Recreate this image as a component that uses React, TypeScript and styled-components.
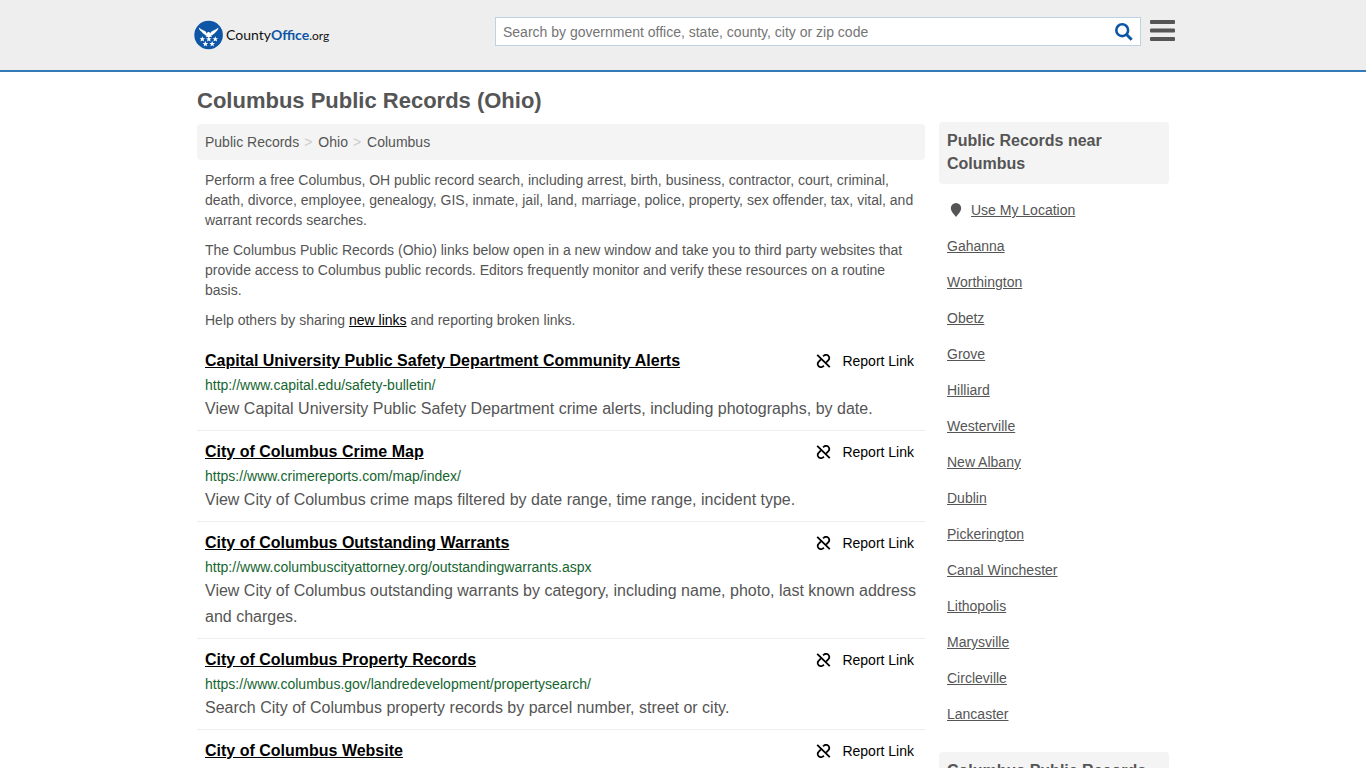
import React from "react";
import styled, { createGlobalStyle } from "styled-components";

const GlobalStyle = createGlobalStyle`
  * { box-sizing: border-box; }
  body {
    margin: 0;
    background: #fff;
    color: #555;
    font-family: Arial, "Liberation Sans", sans-serif;
    font-size: 14px;
    line-height: 20px;
  }
`;

const Page = styled.div`
  min-height: 100vh;
`;

const Header = styled.header`
  background: #eee;
  border-bottom: 2px solid #337ab7;
`;

const HeaderInner = styled.div`
  display: flex;
  align-items: flex-start;
  justify-content: space-between;
  max-width: 984px;
  height: 70px;
  margin: 0 auto;
  padding: 17px 0 0 3px;
`;

const Logo = styled.a`
  display: flex;
  align-items: center;
  gap: 2px;
  height: 36px;
  color: #111;
  font-family: Lato, sans-serif;
  font-size: 14px;
  text-decoration: none;
  svg { display: block; }
  strong { color: #0d56a6; font-weight: 700; }
  small { font-size: 12px; font-weight: 400; }
`;

const Tools = styled.div`
  display: flex;
  align-items: flex-start;
  gap: 9px;
  width: 680px;
`;

const SearchForm = styled.form`
  display: flex;
  flex: 1;
  height: 29px;
  background: #fff;
  border: 1px solid #bcd3e6;
`;

const SearchInput = styled.input`
  flex: 1;
  min-width: 0;
  padding: 0 7px;
  border: 0;
  outline: 0;
  background: transparent;
  font: inherit;
  color: #555;
  &::placeholder { color: #757575; opacity: 1; }
`;

const IconButton = styled.button`
  display: flex;
  align-items: center;
  justify-content: center;
  padding: 0;
  border: 0;
  background: transparent;
  cursor: pointer;
  svg { display: block; }
`;

const SearchButton = styled(IconButton)`
  width: 32px;
`;

const MenuButton = styled(IconButton)`
  width: 25px;
  height: 27px;
`;

const Columns = styled.div`
  display: flex;
  align-items: flex-start;
  gap: 14px;
  max-width: 972px;
  margin: 0 auto;
`;

const Main = styled.main`
  flex: 1;
  min-width: 0;
`;

const Title = styled.h1`
  margin: 0;
  padding: 15px 0 9px;
  font-size: 22px;
  line-height: 28px;
`;

const Breadcrumb = styled.nav`
  display: flex;
  padding: 8px;
  border-radius: 4px;
  background: #f4f4f4;
  a { color: inherit; text-decoration: none; }
  span { padding: 0 6px 0 5px; color: #ccc; }
`;

const Intro = styled.div`
  padding: 10px 8px;
  p { margin: 0 0 10px; }
  p:last-child { margin: 0; }
  a { color: #000; }
`;

const Records = styled.ul`
  margin: 0;
  padding: 0;
  list-style: none;
`;

const RecordItem = styled.li`
  padding: 8px;
  border-bottom: 1px solid #eee;
`;

const RecordHead = styled.div`
  display: flex;
  justify-content: space-between;
  line-height: 26px;
`;

const RecordLink = styled.a`
  color: #000;
  font-size: 16px;
  font-weight: 700;
`;

const ReportLink = styled.a`
  display: flex;
  align-items: center;
  gap: 11px;
  padding-right: 3px;
  color: #000;
  text-decoration: none;
`;

const RecordUrl = styled.div`
  color: #15652f;
  line-height: 22px;
`;

const RecordText = styled.p`
  margin: 0;
  font-size: 16px;
  line-height: 26px;
`;

const Aside = styled.aside`
  width: 230px;
  padding-top: 50px;
`;

const PanelTitle = styled.h2`
  margin: 0;
  padding: 7px 8px 9px;
  border-radius: 4px;
  background: #f4f4f4;
  font-size: 16px;
  line-height: 23px;
`;

const Places = styled.ul`
  margin: 0;
  padding: 8px 8px 20px;
  list-style: none;
  li {
    display: flex;
    align-items: center;
    gap: 9px;
    padding: 8px 0;
  }
  svg { margin-left: 3px; }
  a { color: inherit; }
`;

const records = [
  ["Capital University Public Safety Department Community Alerts", "http://www.capital.edu/safety-bulletin/", "View Capital University Public Safety Department crime alerts, including photographs, by date."],
  ["City of Columbus Crime Map", "https://www.crimereports.com/map/index/", "View City of Columbus crime maps filtered by date range, time range, incident type."],
  ["City of Columbus Outstanding Warrants", "http://www.columbuscityattorney.org/outstandingwarrants.aspx", "View City of Columbus outstanding warrants by category, including name, photo, last known address and charges."],
  ["City of Columbus Property Records", "https://www.columbus.gov/landredevelopment/propertysearch/", "Search City of Columbus property records by parcel number, street or city."],
  ["City of Columbus Website", "", ""],
];

const places = ["Gahanna", "Worthington", "Obetz", "Grove", "Hilliard", "Westerville", "New Albany", "Dublin", "Pickerington", "Canal Winchester", "Lithopolis", "Marysville", "Circleville", "Lancaster"];

const star = "M0-2.9 .8-.9 2.8-.9 1.2.4 1.8 2.4 0 1.2-1.8 2.4-1.2.4-2.8-.9-.8-.9Z";
const stars = [[8.3, 19.2], [14.8, 19.2], [21.3, 19.2], [11.4, 24], [18.2, 24]];

const EagleMark = () => (
  <svg width="30" height="30" viewBox="0 0 30 30" aria-hidden="true">
    <circle cx="14.6" cy="15" r="14.3" fill="#0d56a6" />
    <path fill="#fff" d="M4.8 7.6c1.5 1.7 4.3 2.2 6 3.5 1.1.8 1.6 1.7 2.1 2.6.2-1.1.7-1.7 1.6-1.7s1.5.5 1.7 1.5c.5-1 1.1-1.7 2.2-2.4 1.8-1.2 4.6-1.8 6-3.5-.1 2.3-1.4 3.6-2.8 4.5-.3 1.1-1.2 1.8-2.3 2.2-.6.8-1.4 1.2-2.3 1.3l1 1.5-1.5-.4-1.7.8-1.7-.8-1.5.4 1-1.5c-.9-.1-1.7-.5-2.3-1.3-1.1-.4-2-1.1-2.3-2.2-1.5-.9-3-2.2-3.2-4.5Z" />
    {stars.map(([x, y]) => <path key={`${x}-${y}`} d={star} fill="#fff" transform={`translate(${x} ${y})`} />)}
  </svg>
);

const BrokenLinkIcon = () => (
  <svg width="15" height="14" viewBox="0 0 15 14" fill="none" stroke="#000" strokeWidth="1.8" aria-hidden="true">
    <path d="M1.2 .8 13.8 13.2M7 2.3 7.9 1.6a3.3 3.3 0 0 1 5.2 1.4 3.3 3.3 0 0 1-.9 3.4L10.300 8.300M8 11.700 7.100 12.400a3.300 3.300 0 0 1-5.200-1.400 3.300 3.300 0 0 1 .9-3.400L4.700 5.700" />
  </svg>
);

export default function App() {
  return (
    <Page>
      <GlobalStyle />
      <Header>
        <HeaderInner>
          <Logo href="#" aria-label="CountyOffice.org">
            <EagleMark />
            <span>County<strong>Office</strong><small>.org</small></span>
          </Logo>
          <Tools>
            <SearchForm>
              <SearchInput type="search" aria-label="Search" placeholder="Search by government office, state, county, city or zip code" />
              <SearchButton type="submit" aria-label="Submit search">
                <svg width="18" height="18" viewBox="0 0 18 18" fill="none" stroke="#0d56a6">
                  <circle cx="7.2" cy="7.2" r="5.9" strokeWidth="2.6" />
                  <path d="m11.5 11.5 5.2 5.2" strokeWidth="3" />
                </svg>
              </SearchButton>
            </SearchForm>
            <MenuButton type="button" aria-label="Menu">
              <svg width="25" height="21" viewBox="0 0 25 21" fill="#555">
                <rect width="25" height="4" rx="1" />
                <rect y="8.5" width="25" height="4" rx="1" />
                <rect y="17" width="25" height="4" rx="1" />
              </svg>
            </MenuButton>
          </Tools>
        </HeaderInner>
      </Header>
      <Columns>
        <Main>
          <Title>Columbus Public Records (Ohio)</Title>
          <Breadcrumb aria-label="Breadcrumb">
            <a href="#">Public Records</a><span>&gt;</span>
            <a href="#">Ohio</a><span>&gt;</span>
            <a href="#">Columbus</a>
          </Breadcrumb>
          <Intro>
            <p>Perform a free Columbus, OH public record search, including arrest, birth, business, contractor, court, criminal, death, divorce, employee, genealogy, GIS, inmate, jail, land, marriage, police, property, sex offender, tax, vital, and warrant records searches.</p>
            <p>The Columbus Public Records (Ohio) links below open in a new window and take you to third party websites that provide access to Columbus public records. Editors frequently monitor and verify these resources on a routine basis.</p>
            <p>Help others by sharing <a href="#">new links</a> and reporting broken links.</p>
          </Intro>
          <Records>
            {records.map(([title, url, text]) => (
              <RecordItem key={title}>
                <RecordHead>
                  <RecordLink href="#">{title}</RecordLink>
                  <ReportLink href="#"><BrokenLinkIcon />Report Link</ReportLink>
                </RecordHead>
                {url && <RecordUrl>{url}</RecordUrl>}
                {text && <RecordText>{text}</RecordText>}
              </RecordItem>
            ))}
          </Records>
        </Main>
        <Aside>
          <PanelTitle>Public Records near Columbus</PanelTitle>
          <Places>
            <li>
              <svg width="12" height="14" viewBox="0 0 12 14" fill="#555" aria-hidden="true">
                <path d="M6 0a5.2 5.2 0 0 1 5.2 5.2C11.2 8.2 8.2 11 6 14 3.8 11 .8 8.2 .8 5.2A5.2 5.2 0 0 1 6 0Z" />
              </svg>
              <a href="#">Use My Location</a>
            </li>
            {places.map((place) => <li key={place}><a href="#">{place}</a></li>)}
          </Places>
          <PanelTitle>Columbus Public Records</PanelTitle>
        </Aside>
      </Columns>
    </Page>
  );
}
